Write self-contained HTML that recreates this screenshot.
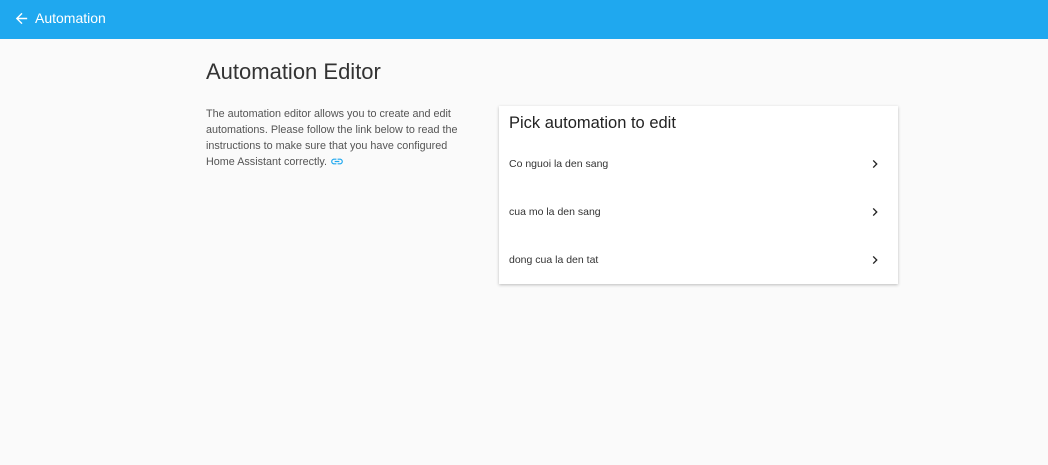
<!DOCTYPE html>
<html><head><meta charset="utf-8"><style>
body{margin:0;width:1048px;height:465px;background:#fafafa;font-family:"Liberation Sans",sans-serif;overflow:hidden;position:relative}
.hdr{position:absolute;left:0;top:0;width:1048px;height:39px;background:#1fa8ef;color:#fff}
.hdr .t{position:absolute;left:35px;top:10px;font-size:14px}
.hdr svg{position:absolute;left:13px;top:10px}
h1{position:absolute;left:206px;top:59px;margin:0;font-weight:400;font-size:22px;color:#333}
.desc{position:absolute;left:206px;top:106px;width:256px;font-size:10.8px;line-height:16px;color:#555}
.card{position:absolute;left:499px;top:106px;width:399px;height:178px;background:#fff;box-shadow:0 1px 3px rgba(0,0,0,.25)}
.card h2{margin:0;position:absolute;left:10px;top:8px;font-weight:400;font-size:16.5px;color:#222}
.row{position:absolute;left:10px;width:378px;font-size:10.5px;color:#333}
.row svg{position:absolute;right:4px;top:-2px}
</style></head><body>
<div class="hdr"><svg width="17" height="17" viewBox="0 0 24 24"><path d="M20 11H7.8l5.6-5.6L12 4l-8 8 8 8 1.4-1.4L7.8 13H20z" fill="#fff"/></svg><span class="t">Automation</span></div>
<h1>Automation Editor</h1>
<div class="desc">The automation editor allows you to create and edit automations. Please follow the link below to read the instructions to make sure that you have configured Home Assistant correctly. <svg width="14" height="9" viewBox="0 0 24 14" style="vertical-align:-1px"><path d="M3.9 7c0-1.7 1.4-3.1 3.1-3.1h4V2H7C4.2 2 2 4.2 2 7s2.2 5 5 5h4v-1.9H7C5.3 10.1 3.9 8.7 3.9 7zM8 8h8V6H8zm9-6h-4v1.9h4c1.7 0 3.1 1.4 3.1 3.1s-1.4 3.1-3.1 3.1h-4V12h4c2.8 0 5-2.2 5-5s-2.2-5-5-5z" fill="#1fa8ef"/></svg></div>
<div class="card"><h2>Pick automation to edit</h2>
<div class="row" style="top:52px">Co nguoi la den sang<svg width="16" height="16" viewBox="0 0 24 24"><path d="M8.6 16.6L13.2 12 8.6 7.4 10 6l6 6-6 6z" fill="#222"/></svg></div>
<div class="row" style="top:100px">cua mo la den sang<svg width="16" height="16" viewBox="0 0 24 24"><path d="M8.6 16.6L13.2 12 8.6 7.4 10 6l6 6-6 6z" fill="#222"/></svg></div>
<div class="row" style="top:148px">dong cua la den tat<svg width="16" height="16" viewBox="0 0 24 24"><path d="M8.6 16.6L13.2 12 8.6 7.4 10 6l6 6-6 6z" fill="#222"/></svg></div>
</div>
</body></html>
